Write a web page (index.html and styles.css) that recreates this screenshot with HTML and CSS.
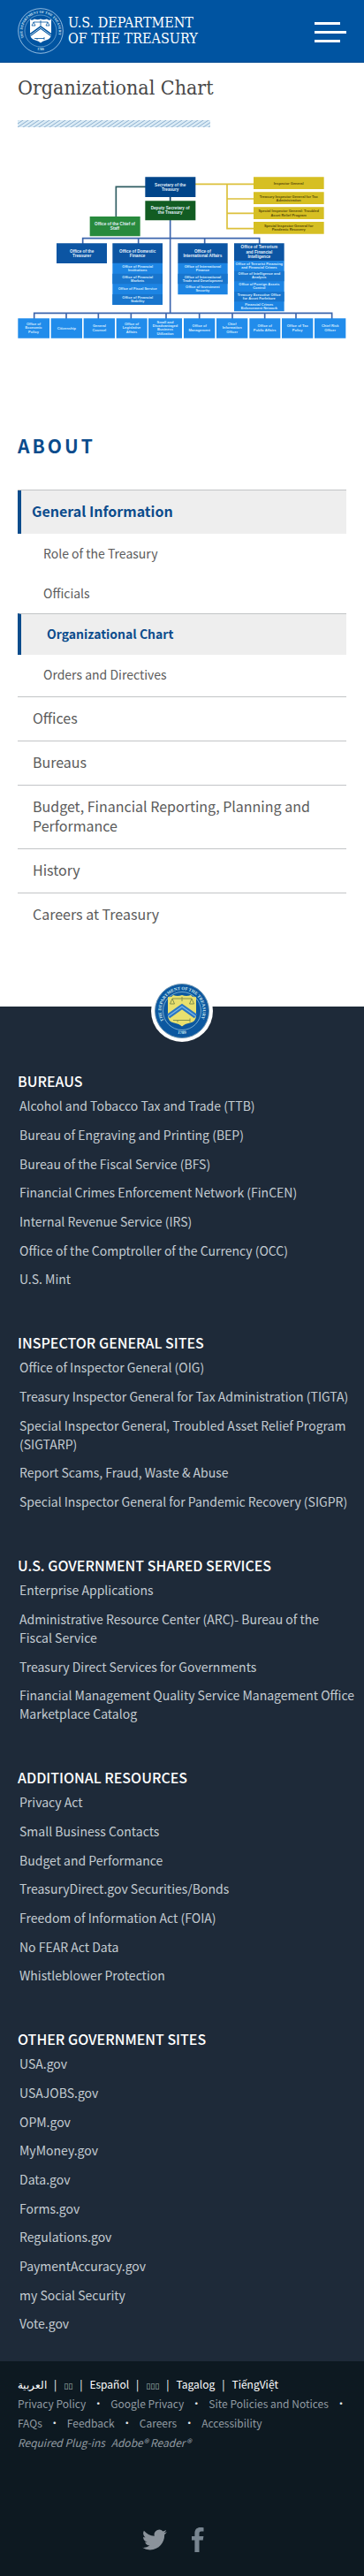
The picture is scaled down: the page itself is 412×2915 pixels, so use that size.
FILE: index.html
```html
<!DOCTYPE html>
<html lang="en">
<head>
<meta charset="utf-8">
<meta name="viewport" content="width=device-width, initial-scale=1">
<title>Organizational Chart | U.S. Department of the Treasury</title>
<link rel="stylesheet" href="styles.css">
</head>
<body>
<header class="site-header">
  <a class="brand" href="#">
    <svg class="brand-seal" viewBox="0 0 52 52" aria-hidden="true">
      <defs><path id="ring" d="M7 34A20.500 20.500 0 1 1 45 34"/><path id="ring-low" d="M14 44Q26 52 38 44"/></defs>
      <circle cx="26" cy="26" r="25.300" fill="none" stroke="#b8d6f0" stroke-width=".8"/>
      <circle cx="26" cy="26" r="18" fill="none" stroke="#9cc3e6" stroke-width=".6"/>
      <text class="seal-text"><textPath href="#ring">THE DEPARTMENT OF THE TREASURY</textPath></text>
      <text class="seal-text" text-anchor="middle"><textPath href="#ring-low" startOffset="50%">1789</textPath></text>
      <path fill="#fff" d="M14 13q3 1.500 5-.5 3.500 1.500 7 0 3.500 1.500 7 0 2 2 5 .5v16q0 6-6 7.500-4 .8-6 3-2-2.200-6-3-6-1.500-6-7.500z"/>
      <path fill="none" stroke="#0054a1" stroke-width="3.200" d="M13.500 31 26 22l12.500 9"/>
      <path fill="none" stroke="#fff" stroke-width=".7" d="M14 31 26 22.300 38 31"/>
      <path fill="none" stroke="#0054a1" stroke-width=".8" d="M18 16h16M26 14v6M18 16l-2 4h4zM34 16l-2 4h4zM19 34.500h11m0-1.500v3m-8-1.500v1.500"/>
    </svg>
    <span class="brand-name">U.S. DEPARTMENT<br>OF THE TREASURY</span>
  </a>
  <button class="menu-button" type="button" aria-label="Menu"><span></span><span></span><span></span></button>
</header>

<main class="content">
  <h1 class="page-title">Organizational Chart</h1>
  <svg class="hatch" aria-hidden="true">
    <defs>
      <pattern id="stripes" width="6" height="4" patternUnits="userSpaceOnUse">
        <path fill="#dcecf6" d="M0 0h6v4H0z"/>
        <path stroke="#8cb0d0" d="M-3 2 3-2M-3 6 9-2M3 6 9 2"/>
      </pattern>
    </defs>
    <rect width="100%" height="100%" fill="url(#stripes)"/>
  </svg>

  <svg class="org-chart" viewBox="60 0 1116 630" role="img" aria-label="Treasury organizational chart">
    <g fill="none" stroke="#2f5d62" stroke-width="5">
      <path d="M500 94H394v104"/><path d="M578 120v30" stroke="#123f63"/>
    </g>
    <g fill="none" stroke="#dcc03a" stroke-width="5"><path d="M660 85h205M771 85v151h94M771 135h94M771 184h94"/></g>
    <g fill="none" stroke="#3d66ad" stroke-width="5">
      <path d="M578 205v318M281 290v-21h600v21M470 269v20M695 269v20M116 545v-22h1011v22M225 523v20M334 523v20M445 523v20M564 523v20M677 523v20M789 523v20M899 523v20M1005 523v20"/>
    </g>
    <path fill="#00458a" d="M493 61h171v68H493z"/>
    <path fill="#125c22" d="M493 142h171v66H493z"/>
    <path fill="#288a3d" d="M305 195h171v67H305z"/>
    <path fill="#d6bf23" d="M861 61h239v41H861zM861 112h239v41H861zM861 163h239v41H861zM861 213h239v41H861z"/>
    <path fill="#0c55a3" d="M192 286h171v68H192zM382 286h170v68H382zM604 286h169v68H604zM795 286h170v60H795z"/>
    <path fill="#1c84e3" d="M382 353h170v142H382zM604 353h169v107H604zM795 345h170v172H795z"/>
    <path fill="#1875cd" d="M382 389h170v35H382zM382 459h170v36H382zM604 389h169v35H604zM795 380h170v35H795zM795 450h170v34H795z"/>
    <path fill="#218ceb" d="M61 541h107v67H61zM173 541h106v67H173zM284 541h106v67H284zM395 541h105v67H395zM504 541h114v67H504zM624 541h106v67H624zM735 541h106v67H735zM847 541h105v67H847zM957 541h106v67H957zM1068 541h106v67h-106z"/>
    <g class="chart-head">
      <text x="578" y="92">Secretary of the</text><text x="578" y="107">Treasury</text>
      <text x="578" y="172">Deputy Secretary of</text><text x="578" y="187">the Treasury</text>
      <text x="390" y="224">Office of the Chief of</text><text x="390" y="239">Staff</text>
      <text x="278" y="317">Office of the</text><text x="278" y="332">Treasurer</text>
      <text x="467" y="317">Office of Domestic</text><text x="467" y="332">Finance</text>
      <text x="688" y="317">Office of</text><text x="688" y="332">International Affairs</text>
      <text x="880" y="304">Office of Terrorism</text><text x="880" y="320">and Financial</text><text x="880" y="335">Intelligence</text>
    </g>
    <g class="chart-gold">
      <text x="980" y="86">Inspector General</text>
      <text x="980" y="131">Treasury Inspector General for Tax</text><text x="980" y="144">Administration</text>
      <text x="980" y="181">Special Inspector General: Troubled</text><text x="980" y="194">Asset Relief Program</text>
      <text x="980" y="231">Special Inspector General for</text><text x="980" y="244">Pandemic Recovery</text>
    </g>
    <g class="chart-sub">
      <text x="467" y="369">Office of Financial</text><text x="467" y="381">Institutions</text>
      <text x="467" y="404">Office of Financial</text><text x="467" y="416">Markets</text>
      <text x="467" y="445">Office of Fiscal Service</text>
      <text x="467" y="474">Office of Financial</text><text x="467" y="486">Stability</text>
      <text x="688" y="369">Office of International</text><text x="688" y="381">Finance</text>
      <text x="688" y="404">Office of International</text><text x="688" y="416">Trade and Development</text>
      <text x="688" y="438">Office of Investment</text><text x="688" y="450">Security</text>
      <text x="880" y="359">Office of Terrorist Financing</text><text x="880" y="371">and Financial Crimes</text>
      <text x="880" y="394">Office of Intelligence and</text><text x="880" y="406">Analysis</text>
      <text x="880" y="429">Office of Foreign Assets</text><text x="880" y="441">Control</text>
      <text x="880" y="464">Treasury Executive Office</text><text x="880" y="476">for Asset Forfeiture</text>
      <text x="880" y="498">Financial Crimes</text><text x="880" y="510">Enforcement Network</text>
      <text x="114" y="563">Office of</text><text x="114" y="577">Economic</text><text x="114" y="591">Policy</text>
      <text x="226" y="579">Citizenship</text>
      <text x="337" y="571">General</text><text x="337" y="585">Counsel</text>
      <text x="447" y="563">Office of</text><text x="447" y="577">Legislative</text><text x="447" y="591">Affairs</text>
      <text x="561" y="557">Small and</text><text x="561" y="570">Disadvantaged</text><text x="561" y="583">Business</text><text x="561" y="596">Utilization</text>
      <text x="677" y="571">Office of</text><text x="677" y="585">Management</text>
      <text x="788" y="563">Chief</text><text x="788" y="577">Information</text><text x="788" y="591">Officer</text>
      <text x="899" y="571">Office of</text><text x="899" y="585">Public Affairs</text>
      <text x="1010" y="571">Office of Tax</text><text x="1010" y="585">Policy</text>
      <text x="1121" y="571">Chief Risk</text><text x="1121" y="585">Officer</text>
    </g>
  </svg>

  <nav class="section-nav" aria-labelledby="about-heading">
    <h2 class="section-title" id="about-heading">ABOUT</h2>
    <ul class="nav-list">
      <li class="nav-item"><a class="nav-link nav-link-active" href="#">General Information</a>
        <ul class="sub-list">
          <li><a class="sub-link" href="#">Role of the Treasury</a></li>
          <li><a class="sub-link" href="#">Officials</a></li>
          <li><a class="sub-link sub-link-active" href="#" aria-current="page">Organizational Chart</a></li>
          <li><a class="sub-link" href="#">Orders and Directives</a></li>
        </ul>
      </li>
      <li class="nav-item"><a class="nav-link" href="#">Offices</a></li>
      <li class="nav-item"><a class="nav-link" href="#">Bureaus</a></li>
      <li class="nav-item"><a class="nav-link" href="#">Budget, Financial Reporting, Planning and Performance</a></li>
      <li class="nav-item"><a class="nav-link" href="#">History</a></li>
      <li class="nav-item"><a class="nav-link" href="#">Careers at Treasury</a></li>
    </ul>
  </nav>
</main>

<footer class="footer">
  <div class="footer-main">
    <svg class="footer-seal" viewBox="0 0 70 70" aria-hidden="true">
      <defs><path id="seal-arc" d="M14.500 46A23.500 23.500 0 1 1 55.500 46"/><path id="seal-base" d="M22 57Q35 65 48 57"/></defs>
      <circle cx="35" cy="35" r="35" fill="#fff"/>
      <circle cx="35" cy="35" r="30.500" fill="#0c58a0" stroke="#6b93b0"/>
      <circle cx="35" cy="35" r="21.500" fill="#0c58a0" stroke="#8fc0dc" stroke-width=".8"/>
      <text class="seal-text-large"><textPath href="#seal-arc">THE DEPARTMENT OF THE TREASURY</textPath></text>
      <text class="seal-text-large" text-anchor="middle"><textPath href="#seal-base" startOffset="50%">1789</textPath></text>
      <path fill="#e9e06e" d="M19 19q4 1 6-2 5 2 10 0 5 2 10 0 2 3 6 2v21q0 7-7 8.500-6 1-9 4-3-3-9-4-7-1.500-7-8.500z"/>
      <path fill="none" stroke="#2a76c4" stroke-width="5.500" d="M19.500 41 35 30l15.500 11"/>
      <path fill="none" stroke="#7bb8e8" stroke-width="1.200" d="M19.500 41 35 30l15.500 11"/>
      <path fill="none" stroke="#83904c" d="M24 21h22M35 19v5M24 21l-2.500 6h5zM46 21l-2.500 6h5zM25 45.500h19m0-2v4m-14-2v2"/>
    </svg>
    <section class="footer-group">
      <h3 class="footer-title">BUREAUS</h3>
      <ul class="footer-list">
        <li><a href="#">Alcohol and Tobacco Tax and Trade (TTB)</a></li>
        <li><a href="#">Bureau of Engraving and Printing (BEP)</a></li>
        <li><a href="#">Bureau of the Fiscal Service (BFS)</a></li>
        <li><a href="#">Financial Crimes Enforcement Network (FinCEN)</a></li>
        <li><a href="#">Internal Revenue Service (IRS)</a></li>
        <li><a href="#">Office of the Comptroller of the Currency (OCC)</a></li>
        <li><a href="#">U.S. Mint</a></li>
      </ul>
    </section>
    <section class="footer-group">
      <h3 class="footer-title">INSPECTOR GENERAL SITES</h3>
      <ul class="footer-list">
        <li><a href="#">Office of Inspector General (OIG)</a></li>
        <li><a href="#">Treasury Inspector General for Tax Administration (TIGTA)</a></li>
        <li><a href="#">Special Inspector General, Troubled Asset Relief Program (SIGTARP)</a></li>
        <li><a href="#">Report Scams, Fraud, Waste &amp; Abuse</a></li>
        <li><a href="#">Special Inspector General for Pandemic Recovery (SIGPR)</a></li>
      </ul>
    </section>
    <section class="footer-group">
      <h3 class="footer-title">U.S. GOVERNMENT SHARED SERVICES</h3>
      <ul class="footer-list">
        <li><a href="#">Enterprise Applications</a></li>
        <li><a href="#">Administrative Resource Center (ARC)- Bureau of the <br>Fiscal Service</a></li>
        <li><a href="#">Treasury Direct Services for Governments</a></li>
        <li><a href="#">Financial Management Quality Service Management Office Marketplace Catalog</a></li>
      </ul>
    </section>
    <section class="footer-group">
      <h3 class="footer-title">ADDITIONAL RESOURCES</h3>
      <ul class="footer-list">
        <li><a href="#">Privacy Act</a></li>
        <li><a href="#">Small Business Contacts</a></li>
        <li><a href="#">Budget and Performance</a></li>
        <li><a href="#">TreasuryDirect.gov Securities/Bonds</a></li>
        <li><a href="#">Freedom of Information Act (FOIA)</a></li>
        <li><a href="#">No FEAR Act Data</a></li>
        <li><a href="#">Whistleblower Protection</a></li>
      </ul>
    </section>
    <section class="footer-group">
      <h3 class="footer-title">OTHER GOVERNMENT SITES</h3>
      <ul class="footer-list">
        <li><a href="#">USA.gov</a></li>
        <li><a href="#">USAJOBS.gov</a></li>
        <li><a href="#">OPM.gov</a></li>
        <li><a href="#">MyMoney.gov</a></li>
        <li><a href="#">Data.gov</a></li>
        <li><a href="#">Forms.gov</a></li>
        <li><a href="#">Regulations.gov</a></li>
        <li><a href="#">PaymentAccuracy.gov</a></li>
        <li><a href="#">my Social Security</a></li>
        <li><a href="#">Vote.gov</a></li>
      </ul>
    </section>
  </div>
  <div class="footer-legal">
    <ul class="languages">
      <li><a href="#" lang="ar">العربية</a></li>
      <li><a class="boxes" href="#">▯▯</a></li>
      <li><a href="#" lang="es">Español</a></li>
      <li><a class="boxes" href="#">▯▯▯</a></li>
      <li><a href="#">Tagalog</a></li>
      <li><a href="#" lang="vi">TiếngViệt</a></li>
    </ul>
    <ul class="policies">
      <li><a href="#">Privacy Policy</a></li>
      <li><a href="#">Google Privacy</a></li>
      <li><a href="#">Site Policies and Notices</a></li>
      <li><a href="#">FAQs</a></li>
      <li><a href="#">Feedback</a></li>
      <li><a href="#">Careers</a></li>
      <li><a href="#">Accessibility</a></li>
    </ul>
    <p class="plugins"><span>Required Plug-ins</span> <a href="#">Adobe® Reader®</a></p>
    <div class="social">
      <a href="#" aria-label="Twitter"><svg class="twitter" viewBox="0 0 24 24"><path fill="#8b939b" d="M23.950 4.570a10 10 0 0 1-2.820.77 4.960 4.960 0 0 0 2.160-2.720c-.95.550-2 .950-3.130 1.180a4.920 4.920 0 0 0-8.380 4.480C7.690 8.090 4.070 6.130 1.640 3.160a4.820 4.820 0 0 0-.67 2.480c0 1.710.870 3.210 2.190 4.100a4.900 4.900 0 0 1-2.230-.62v.060a4.920 4.920 0 0 0 3.950 4.830 5 5 0 0 1-2.210.080 4.940 4.940 0 0 0 4.600 3.420A9.870 9.870 0 0 1 0 19.540a14 14 0 0 0 7.550 2.210c9.050 0 14-7.500 14-13.990l-.02-.63a9.940 9.940 0 0 0 2.420-2.560z"/></svg></a>
      <a href="#" aria-label="Facebook"><svg class="facebook" viewBox="0 0 14 28"><path fill="#788590" d="M13.500.2v4.400h-2.600c-2 0-2.400 1-2.400 2.400v3h4.900l-.7 4.600H8.500V28H3.400V14.600H0V10h3.400V6.400C3.400 2.200 6 0 9.700 0c1.800 0 3.300.1 3.800.2z"/></svg></a>
    </div>
  </div>
</footer>
</body>
</html>
```

FILE: styles.css
```css
* { box-sizing: border-box; }

body {
  margin: 0;
  background: #fff;
  color: #5b5b5b;
  font-family: "Noto Sans CJK SC", "Noto Sans", sans-serif;
  font-size: 14px;
}

a { color: inherit; text-decoration: none; }
ul { list-style: none; margin: 0; padding: 0; }
svg { display: block; }

.site-header {
  display: flex;
  align-items: center;
  justify-content: space-between;
  height: 71px;
  padding: 0 20px;
  background: #0054a1;
  border-bottom: 1px solid #004a92;
}
.brand { display: flex; align-items: center; gap: 5px; color: #fff; }
.brand-seal { width: 52px; height: 52px; }
.brand-name {
  font-family: "DejaVu Serif Condensed", "DejaVu Serif", serif;
  font-size: 16px;
  line-height: 18px;
}
.seal-text { font: bold 4px "Liberation Serif", serif; fill: #d8eafa; }
.seal-text-large { font: bold 5px "Liberation Serif", serif; fill: #d3edf2; }

.menu-button {
  display: flex;
  flex-direction: column;
  gap: 7px;
  width: 36px;
  padding: 2px 0 0;
  border: 0;
  background: none;
}
.menu-button span { width: 29px; height: 3px; background: #fff; }
.menu-button span:nth-child(2) { width: 36px; }

.content { padding: 0 20px 79px; }
.page-title {
  margin: 12px 0 0;
  color: #484848;
  font-family: "DejaVu Serif Condensed", "DejaVu Serif", serif;
  font-size: 23px;
  font-weight: 400;
  line-height: 32px;
}
.hatch {
  width: 218px;
  max-width: 100%;
  height: 8px;
  margin: 21px 0 36px;
}

.org-chart {
  width: 100%;
  height: auto;
  font-family: "Liberation Sans", sans-serif;
  font-weight: 700;
  text-anchor: middle;
}
.chart-head { font-size: 14px; fill: #e3f0fb; }
.chart-gold { font-size: 12px; fill: #5a4d08; }
.chart-sub { font-size: 12px; fill: #d5ebff; }

.section-title {
  margin: 98px 0 34px;
  color: #0c4c8c;
  font-size: 21px;
  font-weight: 700;
  letter-spacing: 3px;
  line-height: 32px;
}
.nav-item { border-top: 1px solid #c2c4c6; }
.nav-link {
  display: block;
  padding: 12px 17px 15px;
  font-size: 16px;
  line-height: 22px;
}
.nav-link-active {
  padding-left: 12px;
  border-left: 4px solid #0c4c8c;
  background: #eee;
  color: #0c4c8c;
  font-weight: 700;
}
.sub-link {
  display: block;
  padding: 11px 29px 12px;
  line-height: 22px;
}
.sub-link-active {
  padding-bottom: 13px;
  border-top: 1px solid #c2c4c6;
  border-left: 4px solid #0c4c8c;
  background: #eee;
  color: #0c4c8c;
  font-weight: 700;
}
.sub-list { padding-bottom: 2px; }

.footer-main {
  position: relative;
  padding: 72px 10px 32px 20px;
  background: #1e2a39;
  color: #c4ccd2;
}
.footer-seal {
  position: absolute;
  top: -30px;
  left: 50%;
  width: 70px;
  height: 70px;
  margin-left: -35px;
}
.footer-group + .footer-group { margin-top: 49px; }
.footer-title {
  margin: 0 0 5px;
  color: #fff;
  font-size: 16px;
  font-weight: 500;
  line-height: 25px;
}
.footer-list { padding-left: 2px; line-height: 21px; }
.footer-list li { padding-bottom: 12px; }
.footer-list li:nth-child(3n) { padding-bottom: 11px; }
.footer-list li:last-child { padding-bottom: 0; }

.footer-legal {
  padding: 15px 10px 27px 20px;
  background: #0d1921;
  color: #919ba2;
  font-size: 12px;
  line-height: 22px;
}
.languages, .policies { display: flex; flex-wrap: wrap; }
.languages { color: #fff; }
.languages li + li::before { content: "|"; margin: 0 8px; }
.boxes { font: 9px "DejaVu Sans", sans-serif; color: #a9b2b8; }
.policies li:not(:last-child)::after { content: "•"; margin: 0 8px; color: #e3e7ea; }
.plugins { margin: 0; font-style: italic; }
.plugins span { margin-right: 4px; }
.social {
  display: flex;
  align-items: center;
  justify-content: center;
  gap: 28px;
  margin-top: 85px;
  padding-right: 30px;
}
.twitter { width: 28px; height: 28px; }
.facebook { width: 14px; height: 28px; }
```
